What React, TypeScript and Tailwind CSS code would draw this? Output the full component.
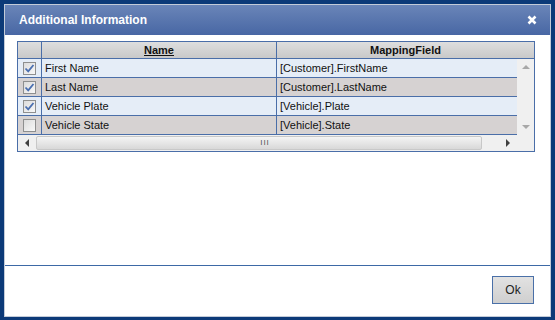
import React, { useState } from "react";

const initialRows = [
  { id: 1, name: "First Name", field: "[Customer].FirstName", checked: true },
  { id: 2, name: "Last Name", field: "[Customer].LastName", checked: true },
  { id: 3, name: "Vehicle Plate", field: "[Vehicle].Plate", checked: true },
  { id: 4, name: "Vehicle State", field: "[Vehicle].State", checked: false },
];

function CheckBox({ checked, onClick }: { checked: boolean; onClick: () => void }) {
  return (
    <button
      onClick={onClick}
      className="flex h-[13px] w-[13px] items-center justify-center border border-[#8e8f8f] bg-gradient-to-br from-[#dcdcdc] to-[#f8f8f8]"
    >
      {checked && (
        <svg width="11" height="11" viewBox="0 0 11 11">
          <path d="M1.5 5.5 L4.2 8.3 L9.5 2" fill="none" stroke="#4a6fb0" strokeWidth="1.8" />
        </svg>
      )}
    </button>
  );
}

function Arrow({ dir }: { dir: "up" | "down" | "left" | "right" }) {
  const pts = {
    up: "0,4 4,0 8,4",
    down: "0,0 8,0 4,4",
    left: "4,0 4,8 0,4",
    right: "0,0 0,8 4,4",
  }[dir];
  const size = dir === "up" || dir === "down" ? { w: 8, h: 4 } : { w: 4, h: 8 };
  const color = dir === "up" || dir === "down" ? "#a8a8a8" : "#404040";
  return (
    <svg width={size.w} height={size.h} viewBox={`0 0 ${size.w} ${size.h}`}>
      <polygon points={pts} fill={color} />
    </svg>
  );
}

export default function App() {
  const [rows, setRows] = useState(initialRows);

  const toggle = (id: number) =>
    setRows((prev) => prev.map((r) => (r.id === id ? { ...r, checked: !r.checked } : r)));

  return (
    <div className="h-[320px] w-[555px] bg-[#0c3a78] pb-[3px] pl-[4px] pr-[4px] pt-[4px] font-['Liberation_Sans',Arial,sans-serif] text-[11px] text-[#111]">
      <div className="flex h-full flex-col border border-[#c3cbd8] bg-white">
        {/* title bar */}
        <div className="flex h-[30px] shrink-0 items-center justify-between bg-gradient-to-b from-[#6a85b8] to-[#4867a4] pl-[14px] pr-[13px]">
          <span className="text-[12px] font-bold text-white">Additional Information</span>
          <button className="text-white">
            <svg width="10" height="10" viewBox="0 0 10 10">
              <path d="M1.5 1.5 L8.5 8.5 M8.5 1.5 L1.5 8.5" stroke="#fff" strokeWidth="2.6" />
            </svg>
          </button>
        </div>

        {/* grid */}
        <div className="flex-1 pl-[12px] pt-[6px]">
          <div className="w-[518px] border border-[#4a6ea8]">
            <div className="flex h-[17px] border-b border-[#4a6ea8] bg-gradient-to-b from-[#dedede] to-[#c9c9c9] font-bold">
              <div className="w-[24px] border-r border-[#4a6ea8]" />
              <div className="flex w-[235px] items-center justify-center border-r border-[#4a6ea8] underline">
                Name
              </div>
              <div className="flex flex-1 items-center justify-center">MappingField</div>
            </div>

            <div className="flex">
              <div className="w-[499px]">
                {rows.map((row, i) => (
                  <div
                    key={row.id}
                    className={`flex h-[19px] border-b border-[#4a6ea8] ${
                      i % 2 === 0 ? "bg-[#e5edf7]" : "bg-[#d6d2d2]"
                    }`}
                  >
                    <div className="flex w-[24px] items-center justify-center border-r border-[#4a6ea8]">
                      <CheckBox checked={row.checked} onClick={() => toggle(row.id)} />
                    </div>
                    <div className="flex w-[235px] items-center border-r border-[#4a6ea8] pl-[3px]">
                      {row.name}
                    </div>
                    <div className="flex flex-1 items-center pl-[3px]">{row.field}</div>
                  </div>
                ))}
              </div>
              <div className="flex flex-1 flex-col items-center justify-between bg-[#f0f0f0] py-[6px]">
                <Arrow dir="up" />
                <Arrow dir="down" />
              </div>
            </div>

            <div className="flex h-[16px] bg-[#f0f0f0]">
              <div className="flex w-[18px] items-center justify-center">
                <Arrow dir="left" />
              </div>
              <div className="my-[1px] flex w-[446px] items-center justify-center rounded-[2px] border border-[#c8c8c8] bg-gradient-to-b from-[#f4f4f4] to-[#d8d8d8] text-[8px] leading-none text-[#555]">
                <span className="ml-[12px] tracking-[1px]">III</span>
              </div>
              <div className="flex w-[35px] items-center justify-center pl-[16px]">
                <Arrow dir="right" />
              </div>
              <div className="flex-1 bg-[#f0f0f0]" />
            </div>
          </div>
        </div>

        {/* footer */}
        <div className="flex h-[51px] shrink-0 items-start justify-end border-t border-[#3d69a6] pr-[16px] pt-[10px]">
          <button className="h-[28px] w-[42px] border border-[#4a70a8] bg-gradient-to-b from-[#e2e2e2] to-[#cfcfcf] text-[12px] text-[#222]">
            Ok
          </button>
        </div>
      </div>
    </div>
  );
}
